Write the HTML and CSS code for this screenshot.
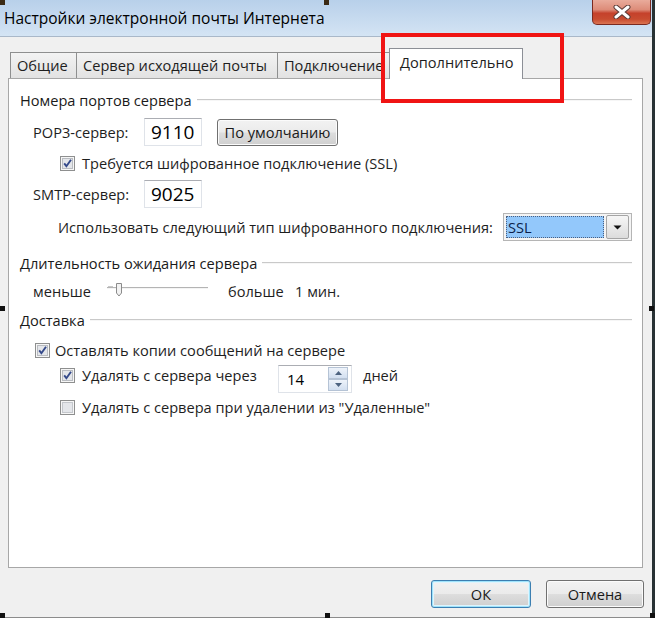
FILE: index.html
```html
<!DOCTYPE html>
<html lang="ru">
<head>
<meta charset="utf-8">
<title>Настройки электронной почты Интернета</title>
<link rel="stylesheet" href="styles.css">
</head>
<body>
<div class="window">
  <div class="titlebar">
    <span class="title">Настройки электронной почты Интернета</span>
    <div class="close">
      <svg width="18" height="14" viewBox="0 0 18 14">
        <path d="M3 2 L15 12 M15 2 L3 12" stroke="#5a3a36" stroke-width="5" stroke-linecap="round"/>
        <path d="M3 2 L15 12 M15 2 L3 12" stroke="#ffffff" stroke-width="3" stroke-linecap="round"/>
      </svg>
    </div>
  </div>

  <div class="tabs">
    <div class="tab tab-general">Общие</div>
    <div class="tab tab-smtp">Сервер исходящей почты</div>
    <div class="tab tab-conn">Подключение</div>
    <div class="tab active">Дополнительно</div>
  </div>

  <div class="panel">
    <div class="group">
      <span class="group-title">Номера портов сервера</span>
      <span class="group-line"></span>
    </div>

    <div class="row row-pop3">
      <span class="field-label">POP3-сервер:</span>
      <span class="num-input">9110</span>
      <span class="btn btn-default">По умолчанию</span>
    </div>

    <div class="row row-ssl">
      <span class="cb checked">
        <svg width="15" height="15" viewBox="0 0 15 15"><rect x="0.5" y="0.5" width="14" height="14" fill="#f6f6f6" stroke="#8e8f8f"/><rect x="2.5" y="2.5" width="10" height="10" fill="#e4e6ea" stroke="#b9bcc1"/><path d="M4.2 7.4 L6.4 10.2 L11 3.8" fill="none" stroke="#34498a" stroke-width="1.9"/></svg>
      </span>
      <span class="cb-text">Требуется шифрованное подключение (SSL)</span>
    </div>

    <div class="row row-smtp">
      <span class="field-label">SMTP-сервер:</span>
      <span class="num-input">9025</span>
    </div>

    <div class="row row-enc">
      <span class="enc-text">Использовать следующий тип шифрованного подключения:</span>
      <span class="select">
        <span class="select-value">SSL</span>
        <span class="select-btn">
          <svg width="9" height="5" viewBox="0 0 9 5"><path d="M0.5 0.5 H8.5 L4.5 4.5 Z" fill="#111"/></svg>
        </span>
      </span>
    </div>

    <div class="group group-2">
      <span class="group-title">Длительность ожидания сервера</span>
      <span class="group-line"></span>
    </div>

    <div class="row row-slider">
      <span class="slider-min">меньше</span>
      <svg class="slider" width="101" height="16" viewBox="0 0 101 16">
        <line x1="0" y1="5.5" x2="101" y2="5.5" stroke="#b4b4b4"/>
        <line x1="0" y1="6.5" x2="101" y2="6.5" stroke="#f4f4f4"/>
        <path d="M1 4.5 H6" stroke="#c8c8c8"/>
        <path d="M9.5 1.5 H14.5 V11 L12 14 L9.5 11 Z" fill="#f2f2f2" stroke="#8b8b8b"/>
      </svg>
      <span class="slider-max">больше</span>
      <span class="slider-val">1 мин.</span>
    </div>

    <div class="group group-3">
      <span class="group-title">Доставка</span>
      <span class="group-line"></span>
    </div>

    <div class="row row-cb1">
      <span class="cb checked">
        <svg width="15" height="15" viewBox="0 0 15 15"><rect x="0.5" y="0.5" width="14" height="14" fill="#f6f6f6" stroke="#8e8f8f"/><rect x="2.5" y="2.5" width="10" height="10" fill="#e4e6ea" stroke="#b9bcc1"/><path d="M4.2 7.4 L6.4 10.2 L11 3.8" fill="none" stroke="#34498a" stroke-width="1.9"/></svg>
      </span>
      <span class="cb-text cb-text-near">Оставлять копии сообщений на сервере</span>
    </div>

    <div class="row row-cb2">
      <span class="cb-unit">
        <span class="cb checked">
          <svg width="15" height="15" viewBox="0 0 15 15"><rect x="0.5" y="0.5" width="14" height="14" fill="#f6f6f6" stroke="#8e8f8f"/><rect x="2.5" y="2.5" width="10" height="10" fill="#e4e6ea" stroke="#b9bcc1"/><path d="M4.2 7.4 L6.4 10.2 L11 3.8" fill="none" stroke="#34498a" stroke-width="1.9"/></svg>
        </span>
        <span class="cb-text cb-text-fixed">Удалять с сервера через</span>
      </span>
      <span class="spinner">
        <span class="spin-value">14</span>
        <span class="spin-btns">
          <span class="spin-btn">
            <svg width="7" height="4" viewBox="0 0 7 4"><path d="M0 4 L3.5 0 L7 4 Z" fill="#4d6380"/></svg>
          </span>
          <span class="spin-btn">
            <svg width="7" height="4" viewBox="0 0 7 4"><path d="M0 0 L3.5 4 L7 0 Z" fill="#4d6380"/></svg>
          </span>
        </span>
      </span>
      <span class="days">дней</span>
    </div>

    <div class="row row-cb3">
      <span class="cb">
        <svg width="15" height="15" viewBox="0 0 15 15"><rect x="0.5" y="0.5" width="14" height="14" fill="#f6f6f6" stroke="#8e8f8f"/><rect x="2.5" y="2.5" width="10" height="10" fill="#e4e6ea" stroke="#c4c7cc"/></svg>
      </span>
      <span class="cb-text">Удалять с сервера при удалении из "Удаленные"</span>
    </div>
  </div>

  <div class="footer">
    <span class="btn btn-ok">ОК</span>
    <span class="btn btn-cancel">Отмена</span>
  </div>

  <div class="highlight"></div>

  <span class="handle h-tl"></span>
  <span class="handle h-tm"></span>
  <span class="handle h-ml"></span>
  <span class="handle h-mr"></span>
  <span class="handle h-bl"></span>
  <span class="handle h-bm"></span>
  <span class="handle h-br"></span>
</div>
</body>
</html>
```

FILE: styles.css
```css
* {
  box-sizing: border-box;
}

html,
body {
  margin: 0;
  padding: 0;
  background: #ffffff;
}

body {
  font-family: "Open Sans", "Noto Sans", "DejaVu Sans", sans-serif;
  font-size: 14.6px;
  color: #1e1e1e;
  width: 657px;
  height: 619px;
  overflow: hidden;
}

.window {
  position: relative;
  width: 655px;
  height: 618px;
  background: #f0f0f0;
  border-right: 3px solid #283234;
  border-bottom: 1px solid #8c8c8c;
}

/* title bar */
.titlebar {
  height: 37px;
  display: flex;
  justify-content: space-between;
  align-items: flex-start;
  background: linear-gradient(#b8d0ea, #d4e4f4);
  border-bottom: 1px solid #a9b8c9;
}

.title {
  font-size: 15.5px;
  line-height: 36px;
  padding-left: 4px;
  color: #000000;
}

.close {
  width: 59px;
  height: 25px;
  margin-right: 1px;
  display: flex;
  align-items: center;
  justify-content: center;
  border: 1px solid #7a2a20;
  border-top: none;
  border-radius: 0 0 5px 5px;
  background: linear-gradient(#e9ab9b 0%, #dd8c79 40%, #c5412b 55%, #c84c30 80%, #db7452 100%);
}

/* tabs */
.tabs {
  position: relative;
  z-index: 1;
  display: flex;
  align-items: flex-end;
  height: 30px;
  margin: 11px 0 0 10px;
}

.tab {
  height: 26px;
  line-height: 24px;
  padding: 0 6px;
  margin-left: -1px;
  border: 1px solid #8e8f8f;
  border-bottom: none;
  background: linear-gradient(#f3f3f3, #e2e2e2);
  white-space: nowrap;
}

.tab-general {
  margin-left: 0;
  width: 67px;
}

.tab-smtp {
  width: 202px;
}

.tab-conn {
  width: 115px;
  overflow: hidden;
}

.tab.active {
  height: 31px;
  line-height: 27px;
  width: 134px;
  margin-left: -3px;
  margin-bottom: -1px;
  padding: 0 10px;
  background: #ffffff;
  border-color: #8c8f96;
}

/* panel */
.panel {
  margin-left: 8px;
  width: 635px;
  height: 490px;
  padding: 11px 10px 0 11px;
  background: #ffffff;
  border: 1px solid #a7a7a7;
  display: flex;
  flex-direction: column;
}

.group {
  display: flex;
  align-items: center;
  height: 20px;
}

.group-title {
  white-space: nowrap;
  color: #1a1a1a;
}

.group-line {
  flex: 1;
  height: 2px;
  margin-left: 5px;
  border-top: 1px solid #c9c9c9;
  border-bottom: 1px solid #f6f6f6;
}

.group-2 {
  margin-top: 12px;
}

.group-3 {
  margin-top: 9px;
}

.row {
  display: flex;
  align-items: center;
  white-space: nowrap;
}

.row-pop3 {
  height: 28px;
  margin-top: 8px;
}

.row-ssl {
  height: 20px;
  margin-top: 7px;
  padding-left: 40px;
}

.row-smtp {
  height: 28px;
  margin-top: 7px;
}

.row-enc {
  height: 28px;
  margin-top: 5px;
}

.row-slider {
  height: 20px;
  margin-top: 8px;
}

.row-cb1 {
  height: 20px;
  margin-top: 10px;
  padding-left: 15px;
}

.row-cb2 {
  height: 28px;
  margin-top: 5px;
  padding-left: 40px;
  align-items: flex-start;
}

.row-cb3 {
  height: 20px;
  margin-top: 4px;
  padding-left: 40px;
}

.field-label {
  width: 111px;
  margin-left: 13px;
}

.num-input {
  width: 58px;
  height: 28px;
  padding-left: 6px;
  font-size: 19px;
  line-height: 26px;
  color: #000000;
  background: #ffffff;
  border: 1px solid #dfe3e9;
  border-top-color: #abadb3;
}

/* buttons */
.btn {
  display: flex;
  align-items: center;
  justify-content: center;
  border: 1px solid #707070;
  border-radius: 3px;
  background: linear-gradient(#f2f2f2 0%, #ebebeb 48%, #dddddd 52%, #cfcfcf 100%);
  box-shadow: inset 0 0 0 1px #fbfbfb;
  color: #1a1a1a;
}

.btn-default {
  width: 121px;
  height: 27px;
  margin-left: 15px;
}

/* checkboxes */
.cb {
  display: flex;
  width: 15px;
  height: 15px;
}

.cb-text {
  margin-left: 7px;
}

.cb-text-near {
  margin-left: 5px;
}

.cb-unit {
  display: flex;
  align-items: center;
  height: 20px;
}

.cb-text-fixed {
  width: 196px;
}

/* encryption select */
.enc-text {
  margin-left: 38px;
}

.select {
  display: flex;
  align-items: center;
  width: 129px;
  height: 28px;
  margin-left: auto;
  margin-right: 0;
  padding: 2px;
  background: #f4f4f4;
  border: 1px solid #b5b5b5;
}

.select-value {
  flex: 1;
  height: 22px;
  line-height: 20px;
  padding-left: 1px;
  background: #93c8fb;
  border: 1px dotted #4a5f80;
  color: #0c1e4a;
}

.select-btn {
  display: flex;
  align-items: center;
  justify-content: center;
  width: 23px;
  height: 24px;
  margin-left: 2px;
  border: 1px solid #a5a5a5;
  border-radius: 2px;
  background: linear-gradient(#f6f6f6, #dcdcdc);
}

/* slider */
.slider-min {
  width: 74px;
  margin-left: 13px;
}

.slider {
  display: block;
  margin-top: -2px;
}

.slider-max {
  width: 67px;
  margin-left: 20px;
}

/* spinner */
.spinner {
  display: flex;
  align-items: center;
  width: 74px;
  height: 28px;
  padding: 1px 3px 1px 0;
  background: #ffffff;
  border: 1px solid #dfe3e9;
  border-top-color: #abadb3;
}

.spin-value {
  flex: 1;
  padding-left: 8px;
  font-size: 15px;
  color: #000000;
}

.spin-btns {
  display: flex;
  flex-direction: column;
  width: 20px;
  height: 24px;
}

.spin-btn {
  flex: 1;
  display: flex;
  align-items: center;
  justify-content: center;
  border: 1px solid #b5c3d5;
  background: linear-gradient(#eef3fa, #d2dff0);
}

.days {
  margin-left: 11px;
  line-height: 20px;
}

/* footer */
.footer {
  display: flex;
  justify-content: flex-end;
  gap: 15px;
  margin-top: 12px;
  padding-right: 8px;
}

.btn-ok {
  width: 100px;
  height: 28px;
  border-color: #3c7fb1;
  box-shadow: inset 0 0 0 1px #9fe3fb, inset 0 0 0 2px #dff4fd;
}

.btn-cancel {
  width: 98px;
  height: 28px;
}

/* overlays */
.highlight {
  position: absolute;
  left: 381px;
  top: 33px;
  width: 183px;
  height: 70px;
  border: 4px solid #f01414;
  z-index: 5;
}

.handle {
  position: absolute;
  width: 5px;
  height: 5px;
  background: #111111;
  z-index: 6;
}

.h-tl { left: 0; top: 0; background: #3b2a14; }
.h-tm { left: 324px; top: 0; background: #3b2a14; }
.h-ml { left: 0; top: 306px; }
.h-mr { left: 649px; top: 306px; }
.h-bl { left: 0; top: 613px; }
.h-bm { left: 325px; top: 613px; }
.h-br { left: 650px; top: 613px; }
```
